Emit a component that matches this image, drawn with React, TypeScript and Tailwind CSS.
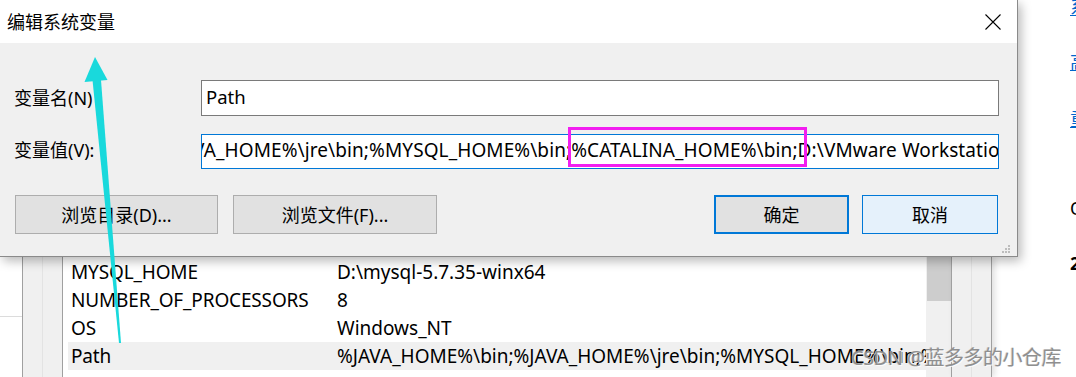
import React from "react";

const FONT = { fontFamily: '"Noto Sans", "Noto Sans CJK SC", sans-serif' };

function Btn({ children, className }: { children: React.ReactNode; className: string }) {
  return (
    <div className={`flex items-center justify-center pt-[2px] text-[18px] text-black ${className}`}>{children}</div>
  );
}

export default function App() {
  const rows = [
    ["MYSQL_HOME", "D:\\mysql-5.7.35-winx64"],
    ["NUMBER_OF_PROCESSORS", "8"],
    ["OS", "Windows_NT"],
    ["Path", "%JAVA_HOME%\\bin;%JAVA_HOME%\\jre\\bin;%MYSQL_HOME%\\bin;%CATALINA_HOME%\\bin"],
  ];
  return (
    <div className="relative w-[1076px] h-[377px] overflow-hidden bg-white flex" style={FONT}>
      {/* left column */}
      <div className="w-[1018px] flex flex-col shrink-0">
        {/* dialog */}
        <div className="relative z-10 h-[257px] bg-[#f0f0f0] border-r border-b border-[#8a8a8a] shadow-[3px_4px_10px_rgba(0,0,0,0.28)] flex flex-col">
          <div className="h-[43px] bg-white flex items-center justify-between pl-[7px] pr-[16px]">
            <span className="text-[18px] text-black leading-none mt-[1px]">编辑系统变量</span>
            <svg width="16" height="16" viewBox="0 0 16 16" className="mt-[1px]">
              <path d="M0.5 0.5 L15.5 15.5 M15.5 0.5 L0.5 15.5" stroke="#000" strokeWidth="1.1" fill="none" />
            </svg>
          </div>
          <div className="relative flex-1 pl-[14px] pr-[18px]">
            <div className="mt-[37px] flex items-center h-[36px]">
              <div className="w-[187px] text-[18px] text-black">变量名(N)</div>
              <div className="flex-1 h-full border border-[#7a7a7a] bg-white flex items-center pl-[4px] pb-[3px] text-[18.5px] text-black">
                Path
              </div>
            </div>
            <div className="mt-[18px] flex items-center h-[35px]">
              <div className="w-[187px] text-[18px] text-black pb-[3px]">变量值(V):</div>
              <div className="relative flex-1 h-full border border-[#0078d7] bg-white flex items-center pb-[2px] overflow-hidden text-[19px] tracking-[0.1px] text-black whitespace-nowrap">
                <span className="ml-[-9px]">VA_HOME%\jre\bin;%MYSQL_HOME%\bin;%CATALINA_HOME%\bin;D:\VMware Workstation\bin</span>
              </div>
            </div>
            <div className="mt-[26px] flex h-[39px]">
              <Btn className="ml-[1px] w-[203px] bg-[#e1e1e1] border border-[#adadad]">浏览目录(D)...</Btn>
              <Btn className="ml-[15px] w-[204px] bg-[#e1e1e1] border border-[#adadad]">浏览文件(F)...</Btn>
              <div className="flex-1" />
              <Btn className="w-[135px] bg-[#e1e1e1] border-2 border-[#0078d7]">确定</Btn>
              <Btn className="ml-[13px] w-[136px] mr-[1px] bg-[#e5f1fb] border border-[#0078d7]">取消</Btn>
            </div>
            <svg className="absolute right-[6px] bottom-[2px]" width="9" height="9" viewBox="0 0 9 9">
              <rect x="6" y="0" width="2" height="2" fill="#bdbdbd" />
              <rect x="3" y="3" width="2" height="2" fill="#bdbdbd" />
              <rect x="6" y="3" width="2" height="2" fill="#bdbdbd" />
              <rect x="0" y="6" width="2" height="2" fill="#bdbdbd" />
              <rect x="3" y="6" width="2" height="2" fill="#bdbdbd" />
              <rect x="6" y="6" width="2" height="2" fill="#bdbdbd" />
            </svg>
          </div>
        </div>
        {/* background window */}
        <div className="flex-1 flex">
          <div className="w-[22px] flex flex-col">
            <div className="h-[60px] border-b border-[#dcdcdc]" />
          </div>
          <div className="w-[41px] flex border-l border-r border-[#a0a0a0] bg-[#f0f0f0]">
            <div className="w-[20px] border-r border-[#e3e3e3]" />
          </div>
          <div className="w-[863px] bg-white pt-[1px] text-[19px] text-black">
            {rows.map(([k, v], i) => (
              <div
                key={k}
                className={`h-[28px] flex items-center whitespace-nowrap overflow-hidden ${i === 3 ? "ml-[5px] pl-[3px] bg-[#f0f0f0]" : "pl-[8px]"}`}
              >
                <div className="w-[266px] shrink-0 tracking-[-0.15px]">{k}</div>
                <div>{v}</div>
              </div>
            ))}
          </div>
          <div className="w-[25px] bg-[#f0f0f0] pl-[1px]">
            <div className="h-[44px] bg-[#cdcdcd]" />
          </div>
          <div className="w-[41px] flex border-l border-r border-[#a0a0a0] bg-[#f0f0f0] shadow-[3px_0_6px_rgba(0,0,0,0.12)]">
            <div className="w-[20px] border-r border-[#e3e3e3]" />
          </div>
        </div>
      </div>
      {/* right strip */}
      <div className="flex-1 overflow-hidden relative">
        <div className="ml-[52px] flex flex-col text-[18px] whitespace-nowrap">
          <div className="mt-[-6px] text-[#0066cc] underline">系统</div>
          <div className="mt-[28px] text-[#0066cc] underline">高级</div>
          <div className="mt-[30px] text-[#0066cc] underline">重命名</div>
          <div className="mt-[62px] text-black">Q</div>
          <div className="mt-[28px] text-black font-bold">2</div>
        </div>
      </div>

      {/* annotation box */}
      <div className="absolute left-[568px] top-[127px] w-[239px] h-[40px] border-[3px] border-[#f21ef0] z-20" />
      {/* watermark */}
      <div
        className="absolute left-[851px] top-[343px] z-20 text-[20px] text-[#8f8f8f] whitespace-nowrap tracking-[-0.5px]"
        style={{ textShadow: "1px 1px 0 rgba(255,255,255,0.8), -1px 0 0 rgba(150,150,150,0.35)" }}
      >
        CSDN @蓝多多的小仓库
      </div>
      {/* arrow */}
      <svg className="absolute left-0 top-0 z-30 pointer-events-none" width="1076" height="377">
        <polygon points="95,57 84.5,82 107.5,80" fill="#19d9dc" />
        <polygon points="92.5,80 101,80 121,343 119,343" fill="#19d9dc" />
      </svg>
    </div>
  );
}
